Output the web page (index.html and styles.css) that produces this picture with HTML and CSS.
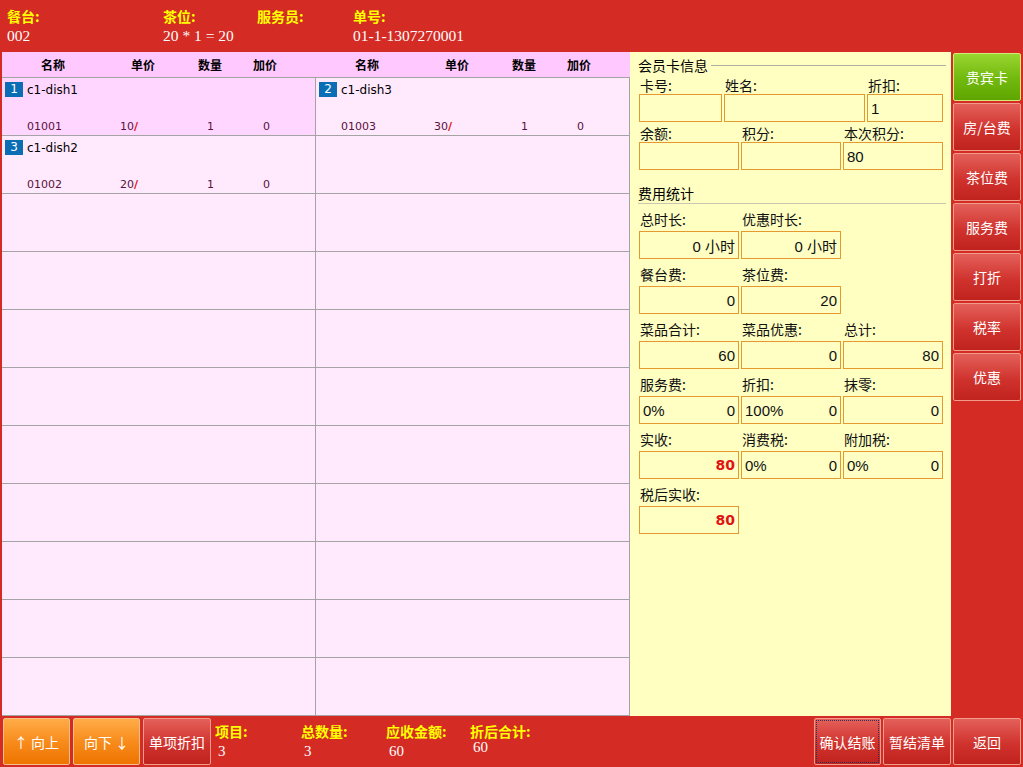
FILE: index.html
```html
<!DOCTYPE html>
<html lang="zh">
<head>
<meta charset="utf-8">
<title>结账</title>
<link rel="stylesheet" href="styles.css">
</head>
<body>
<div class="app">
  <header class="top">
    <div class="f f1"><span class="lbl">餐台:</span><span class="val">002</span></div>
    <div class="f f2"><span class="lbl">茶位:</span><span class="val">20 * 1 = 20</span></div>
    <div class="f f3"><span class="lbl">服务员:</span><span class="val"></span></div>
    <div class="f f4"><span class="lbl">单号:</span><span class="val">01-1-1307270001</span></div>
  </header>

  <main class="main">
    <section class="orders">
      <div class="ohead">
        <div class="hhalf"><span>名称</span><span>单价</span><span>数量</span><span>加价</span></div>
        <div class="hhalf"><span>名称</span><span>单价</span><span>数量</span><span>加价</span></div>
      </div>
      <div class="grid">
        <div class="cell sel">
          <div class="nm"><span class="badge">1</span><span class="dname">c1-dish1</span></div>
          <div class="meta"><span>01001</span><span>10<i class="sl">/</i></span><span>1</span><span>0</span></div>
        </div>
        <div class="cell">
          <div class="nm"><span class="badge">2</span><span class="dname">c1-dish3</span></div>
          <div class="meta"><span>01003</span><span>30<i class="sl">/</i></span><span>1</span><span>0</span></div>
        </div>
        <div class="cell">
          <div class="nm"><span class="badge">3</span><span class="dname">c1-dish2</span></div>
          <div class="meta"><span>01002</span><span>20<i class="sl">/</i></span><span>1</span><span>0</span></div>
        </div>
        <div class="cell"></div>
        <div class="cell"></div><div class="cell"></div>
        <div class="cell"></div><div class="cell"></div>
        <div class="cell"></div><div class="cell"></div>
        <div class="cell"></div><div class="cell"></div>
        <div class="cell"></div><div class="cell"></div>
        <div class="cell"></div><div class="cell"></div>
        <div class="cell"></div><div class="cell"></div>
        <div class="cell"></div><div class="cell"></div>
        <div class="cell"></div><div class="cell"></div>
      </div>
    </section>

    <section class="panel">
      <div class="legend"><span>会员卡信息</span></div>
      <div class="row r1">
        <label>卡号:</label><label>姓名:</label><label>折扣:</label>
        <div class="in"></div><div class="in"></div><div class="in"><span class="l">1</span></div>
      </div>
      <div class="row r2">
        <label>余额:</label><label>积分:</label><label>本次积分:</label>
        <div class="in"></div><div class="in"></div><div class="in"><span class="l">80</span></div>
      </div>

      <div class="stitle">费用统计</div>
      <div class="row r3">
        <label>总时长:</label><label>优惠时长:</label><label></label>
        <div class="in"><span class="r">0 小时</span></div><div class="in"><span class="r">0 小时</span></div><div class="blank"></div>
      </div>
      <div class="row r3">
        <label>餐台费:</label><label>茶位费:</label><label></label>
        <div class="in"><span class="r">0</span></div><div class="in"><span class="r">20</span></div><div class="blank"></div>
      </div>
      <div class="row r3">
        <label>菜品合计:</label><label>菜品优惠:</label><label>总计:</label>
        <div class="in"><span class="r">60</span></div><div class="in"><span class="r">0</span></div><div class="in"><span class="r">80</span></div>
      </div>
      <div class="row r3">
        <label>服务费:</label><label>折扣:</label><label>抹零:</label>
        <div class="in"><span class="l">0%</span><span class="r">0</span></div><div class="in"><span class="l">100%</span><span class="r">0</span></div><div class="in"><span class="r">0</span></div>
      </div>
      <div class="row r3">
        <label>实收:</label><label>消费税:</label><label>附加税:</label>
        <div class="in"><span class="r big">80</span></div><div class="in"><span class="l">0%</span><span class="r">0</span></div><div class="in"><span class="l">0%</span><span class="r">0</span></div>
      </div>
      <div class="row r3">
        <label>税后实收:</label><label></label><label></label>
        <div class="in"><span class="r big">80</span></div><div class="blank"></div><div class="blank"></div>
      </div>
    </section>

    <nav class="side">
      <button class="btn green">贵宾卡</button>
      <button class="btn red">房/台费</button>
      <button class="btn red">茶位费</button>
      <button class="btn red">服务费</button>
      <button class="btn red">打折</button>
      <button class="btn red">税率</button>
      <button class="btn red">优惠</button>
    </nav>
  </main>

  <footer class="bottom">
    <button class="btn orange bb">↑ 向上</button>
    <button class="btn orange bb">向下 ↓</button>
    <button class="btn red bb">单项折扣</button>
    <div class="sum s1"><span class="lbl">项目:</span><span class="val">3</span></div>
    <div class="sum s2"><span class="lbl">总数量:</span><span class="val">3</span></div>
    <div class="sum s3"><span class="lbl">应收金额:</span><span class="val">60</span></div>
    <div class="sum s4"><span class="lbl">折后合计:</span><span class="val up">60</span></div>
    <div class="spacer"></div>
    <button class="btn red bb focus">确认结账</button>
    <button class="btn red bb">暂结清单</button>
    <button class="btn red bb last">返回</button>
  </footer>
</div>
</body>
</html>
```
FILE: styles.css
```css
* { box-sizing: border-box; margin: 0; padding: 0; }
html, body { width: 1023px; height: 767px; overflow: hidden; }
body {
  background: #d42b24;
  font-family: "DejaVu Sans", "Noto Sans CJK SC", sans-serif;
  color: #000;
}
.app { display: flex; flex-direction: column; height: 767px; }

/* top bar */
.top { height: 52px; display: flex; padding: 7px 0 0 7px; }
.top .f { display: flex; flex-direction: column; }
.top .f1 { width: 156px; }
.top .f2 { width: 94px; }
.top .f3 { width: 96px; }
.top .lbl {
  color: #ffff00; font-weight: bold; font-size: 14px; line-height: 18px;
  font-family: "Noto Sans CJK SC", sans-serif;
}
.top .val {
  color: #fff; font-size: 15.5px; line-height: 22px;
  font-family: "Liberation Serif", "Noto Sans CJK SC", serif;
  white-space: nowrap;
}

/* main */
.main { height: 664px; display: flex; }
.orders { width: 628px; margin-left: 2px; background: #ffe9fd; display: flex; flex-direction: column; }
.ohead {
  height: 26px; display: flex; background: #ffc8ff; border-bottom: 1px solid #a4a4a4;
}
.hhalf {
  width: 314px; display: grid; grid-template-columns: 102px 78px 56px 54px;
  align-items: center;
}
.hhalf span {
  text-align: center; font-weight: bold; font-size: 12px;
  font-family: "Noto Sans CJK SC", sans-serif; line-height: 25px;
}
.grid { display: grid; grid-template-columns: 314px 314px; grid-auto-rows: 58px; }
.cell {
  border-right: 1px solid #a4a4a4; border-bottom: 1px solid #a4a4a4;
  padding-top: 4px;
}
.cell.sel { background: #ffd6ff; }
.nm { display: flex; align-items: center; height: 15px; margin-left: 3px; }
.badge {
  width: 18px; height: 15px; background: #0b6db3; color: #fff;
  font-size: 12px; line-height: 15px; text-align: center;
}
.dname { margin-left: 4px; font-size: 12px; color: #000; }
.meta {
  margin-top: 23px; padding-left: 25px;
  display: grid; grid-template-columns: 93px 87px 56px 1fr;
  font-size: 11px; line-height: 14px; color: #5a1040;
}
.sl { font-style: normal; color: #e01010; font-weight: bold; }

/* right panel */
.panel { width: 321px; background: #ffffc2; padding: 0 5px 0 8px; }
.legend {
  margin-top: 4px; height: 18px; display: flex; align-items: center;
  font-family: "Noto Sans CJK SC", sans-serif; font-size: 14px; line-height: 18px;
}
.legend::after { content: ""; flex: 1; height: 1px; background: #b0b0a0; margin-left: 3px; }
.row { display: grid; column-gap: 2px; margin-left: 1px; }
.row label {
  font-family: "Noto Sans CJK SC", sans-serif; font-size: 14px; color: #111;
  padding-left: 1px; white-space: nowrap;
}
.r1 { grid-template-columns: 83px 141px 76px; }
.r2 { grid-template-columns: 100px 100px 100px; }
.r3 { grid-template-columns: 100px 100px 100px; }
.r1 label, .r2 label { height: 20px; line-height: 20px; padding-top: 1px; }
.r3 label { height: 27px; padding-top: 5px; line-height: 20px; }
.in {
  height: 28px; border: 1px solid #e5992e; background: #ffffc4;
  display: flex; align-items: center; justify-content: space-between;
  padding: 0 3px 0 3px;
  font-family: "Liberation Sans", "Noto Sans CJK SC", sans-serif; font-size: 15px; color: #111;
}
.in .r { margin-left: auto; }
.in .big { color: #e01515; font-weight: bold; font-family: "DejaVu Sans", sans-serif; font-size: 14px; }
.blank { height: 28px; }
.stitle {
  margin-top: 14px;
  font-family: "Noto Sans CJK SC", sans-serif; font-size: 14px; line-height: 18px;
  height: 20px; border-bottom: 1px solid #c8c8b0;
}

/* side buttons */
.side { width: 72px; display: flex; flex-direction: column; gap: 2px; padding: 1px 2px 0 2px; }
.btn {
  color: #fff; font-family: "Noto Sans CJK SC", sans-serif; font-size: 14px;
  border-radius: 2px; cursor: pointer;
}
.side .btn { height: 48px; width: 68px; }
.red {
  background: linear-gradient(#e4605a, #d0332e 55%, #c0221d);
  border: 1px solid #f19b8a;
}
.green {
  background: linear-gradient(#99d630, #74bb10 50%, #5ea500);
  border: 1px solid #d6e878;
}
.orange {
  background: linear-gradient(#ffac48, #f88c1c 50%, #ee7400);
  border: 1px solid #f7c08a;
}

/* bottom bar */
.bottom { height: 51px; display: flex; align-items: flex-start; padding: 2px 0 0 3px; }
.bb { height: 47px; width: 67px; margin-right: 3px; }
.bottom .bb:nth-child(3) { width: 68px; margin-right: 4px; }
.sum { display: flex; flex-direction: column; width: 86px; }
.s2 { width: 85px; }
.s3 { width: 84px; }
.sum .lbl {
  color: #ffff00; font-weight: bold; font-size: 14px; line-height: 18px;
  font-family: "Noto Sans CJK SC", sans-serif; margin-top: 4px;
}
.sum .val {
  color: #fff; font-size: 15px; line-height: 18px; padding: 2px 0 0 3px;
  font-family: "Liberation Serif", serif;
}
.sum .val.up { padding-top: 0; line-height: 14px; }
.spacer { flex: 1; }
.focus { width: 67px; margin-right: 2px; outline: 1px dotted #2a3060; outline-offset: -3px; }
.bottom .bb:nth-last-child(2) { width: 68px; margin-right: 2px; }
.last { width: 68px; margin-right: 2px; }
```
